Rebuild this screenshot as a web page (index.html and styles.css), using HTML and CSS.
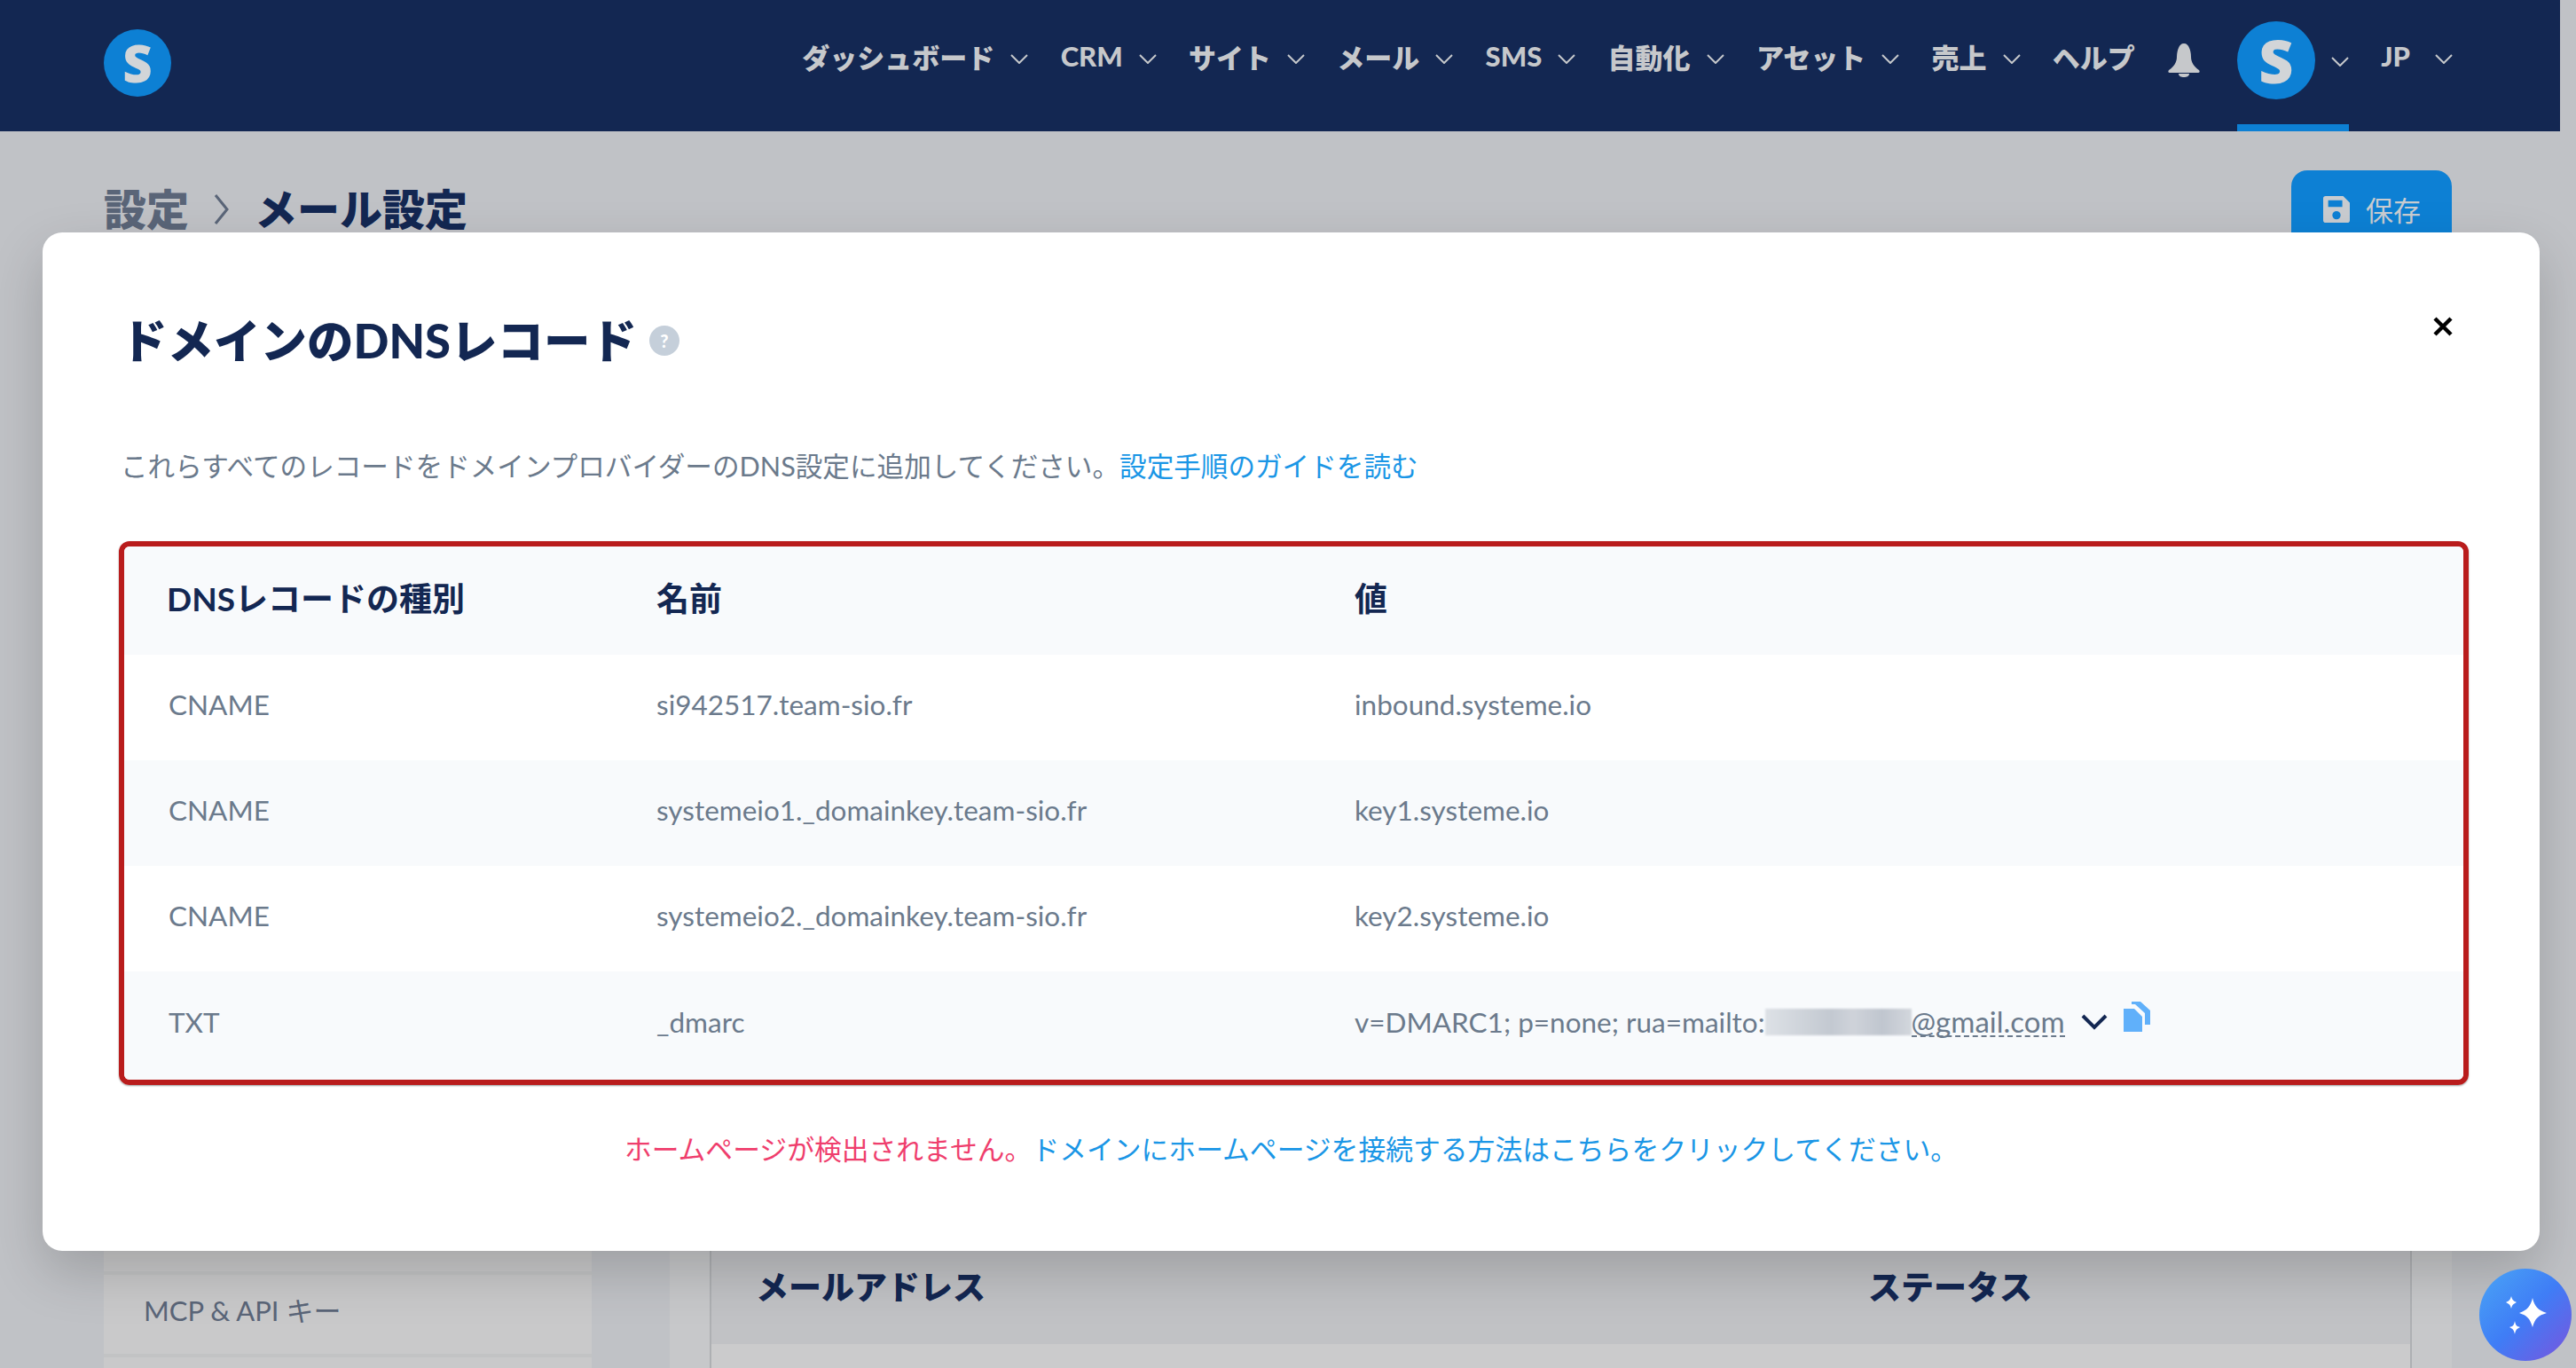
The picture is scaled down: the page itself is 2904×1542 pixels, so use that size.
FILE: index.html
```html
<!DOCTYPE html>
<html lang="ja">
<head>
    <meta charset="UTF-8">
    <title>メール設定</title>
    <link rel="stylesheet" href="styles.css">
</head>
<body>
    <div class="app">
        <div class="header">
            <div class="logo">S</div>
            <div class="nav">
                <div class="nav-item">ダッシュボード <svg class="chev" viewBox="0 0 20 11"><path d="M1 1l9 9 9-9"/></svg></div>
                <div class="nav-item">CRM <svg class="chev" viewBox="0 0 20 11"><path d="M1 1l9 9 9-9"/></svg></div>
                <div class="nav-item">サイト <svg class="chev" viewBox="0 0 20 11"><path d="M1 1l9 9 9-9"/></svg></div>
                <div class="nav-item">メール <svg class="chev" viewBox="0 0 20 11"><path d="M1 1l9 9 9-9"/></svg></div>
                <div class="nav-item">SMS <svg class="chev" viewBox="0 0 20 11"><path d="M1 1l9 9 9-9"/></svg></div>
                <div class="nav-item">自動化 <svg class="chev" viewBox="0 0 20 11"><path d="M1 1l9 9 9-9"/></svg></div>
                <div class="nav-item">アセット <svg class="chev" viewBox="0 0 20 11"><path d="M1 1l9 9 9-9"/></svg></div>
                <div class="nav-item">売上 <svg class="chev" viewBox="0 0 20 11"><path d="M1 1l9 9 9-9"/></svg></div>
                <div class="nav-item">ヘルプ</div>
                <svg class="bell" viewBox="0 0 36 38"><path d="M18 0c3 0 5 2 6 5 1 2 2 6 2 10 0 6 3 11 9 15 1 1 1 3-1 3H2c-2 0-2-2-1-3 6-4 9-9 9-15 0-4 1-8 2-10 1-3 3-5 6-5zM12 34h12c0 3-3 4-6 4s-6-1-6-4z"/></svg>
                <div class="user-item">
                    <div class="avatar">S</div>
                    <svg class="chev" viewBox="0 0 20 11"><path d="M1 1l9 9 9-9"/></svg>
                </div>
                <div class="nav-item lang-item">JP <svg class="chev" viewBox="0 0 20 11"><path d="M1 1l9 9 9-9"/></svg></div>
            </div>
        </div>

        <div class="page">
            <div class="title-row">
                <h1 class="crumb">
                    <span class="crumb-parent">設定</span>
                    <svg class="crumb-sep" viewBox="0 0 18 36"><path d="M2 2l13 16L2 34"/></svg>
                    <span>メール設定</span>
                </h1>
                <button class="save-btn">
                    <svg class="save-icon" viewBox="0 0 32 32"><path d="M3 0h21l8 8v21a3 3 0 0 1-3 3H3a3 3 0 0 1-3-3V3a3 3 0 0 1 3-3zm3 5v8h17V5zm10 13a5 5 0 1 0 0 10 5 5 0 0 0 0-10z" fill-rule="evenodd"/></svg>
                    保存
                </button>
            </div>

            <div class="content">
                <div class="sidebar">
                    <div class="side-item"></div>
                    <div class="side-item">MCP &amp; API キー</div>
                    <div class="side-item"></div>
                </div>
                <div class="panel">
                    <div class="panel-inner">
                        <div class="panel-head">
                            <div class="panel-col-mail">メールアドレス</div>
                            <div>ステータス</div>
                        </div>
                    </div>
                </div>
            </div>
        </div>
    </div>

    <div class="modal">
        <div class="modal-head">
            <h2 class="modal-title">ドメインのDNSレコード</h2>
            <span class="help">?</span>
            <svg class="close" viewBox="0 0 22 22"><path d="M2 2l18 18M20 2L2 20"/></svg>
        </div>
        <p class="modal-desc">これらすべてのレコードをドメインプロバイダーのDNS設定に追加してください。<a href="#">設定手順のガイドを読む</a></p>

        <div class="records">
            <table>
                <thead>
                    <tr>
                        <th class="col-type">DNSレコードの種別</th>
                        <th class="col-name">名前</th>
                        <th>値</th>
                    </tr>
                </thead>
                <tbody>
                    <tr>
                        <td>CNAME</td>
                        <td>si942517.team-sio.fr</td>
                        <td>inbound.systeme.io</td>
                    </tr>
                    <tr class="alt">
                        <td>CNAME</td>
                        <td>systemeio1._domainkey.team-sio.fr</td>
                        <td>key1.systeme.io</td>
                    </tr>
                    <tr>
                        <td>CNAME</td>
                        <td>systemeio2._domainkey.team-sio.fr</td>
                        <td>key2.systeme.io</td>
                    </tr>
                    <tr class="alt last-row">
                        <td>TXT</td>
                        <td>_dmarc</td>
                        <td>
                            <div class="value-cell">
                                <span>v=DMARC1; p=none; rua=mailto:</span><span class="blurred"></span><span class="dashed">@gmail.com</span>
                                <svg class="expand" viewBox="0 0 30 18"><path d="M2 2l13 13L28 2"/></svg>
                                <svg class="copy" viewBox="0 0 30 34"><path d="M0 8h12l9 9v17H0z"/><path d="M9 0h10l11 10v16h-6V13L13 3H9z"/></svg>
                            </div>
                        </td>
                    </tr>
                </tbody>
            </table>
        </div>

        <p class="modal-foot"><span class="error">ホームページが検出されません。</span><a href="#">ドメインにホームページを接続する方法はこちらをクリックしてください。</a></p>
    </div>

    <div class="fab">
        <svg viewBox="0 0 60 60"><path d="M38 11c2 9 6 14 16 17-10 3-13 6-16 16-3-10-6-13-15-16 9-3 13-8 15-17z"/><path d="M14 9c1 4 2 5 6 7-4 2-5 3-6 7-1-4-2-5-6-7 4-2 5-3 6-7z"/><path d="M18 37c1 5 2 6 6 7-4 2-5 3-6 8-1-5-2-6-6-8 4-1 5-2 6-7z"/></svg>
    </div>
</body>
</html>
```

FILE: styles.css
```css
body {
    margin: 0;
    height: 1542px;
    overflow: hidden;
    background-color: #c0c2c6;
    font-family: "Lato", "Noto Sans CJK JP", sans-serif;
    color: #5a6578;
}

.app {
    width: 2886px;
}

.header {
    height: 148px;
    box-sizing: border-box;
    padding: 0 121px 0 117px;
    background-color: #132752;
    display: flex;
    justify-content: space-between;
    color: #c6c8cb;
    font-size: 31px;
    font-weight: 900;
}

.logo {
    width: 76px;
    height: 76px;
    margin-top: 33px;
    border-radius: 50%;
    background-color: #0d80d4;
    color: #d2d5d8;
    font-family: "Open Sans", sans-serif;
    font-size: 58px;
    font-weight: 800;
    line-height: 76px;
    text-align: center;
}

.nav {
    display: flex;
    align-items: flex-start;
}

.nav-item {
    display: flex;
    align-items: center;
    gap: 18px;
    margin-left: 36.3px;
    margin-top: 44px;
    height: 38px;
    white-space: nowrap;
}

.lang-item {
    gap: 28px;
}

.chev {
    width: 20px;
    height: 11px;
    margin-top: 6px;
    fill: none;
    stroke: #c6c8cb;
    stroke-width: 2;
}

.bell {
    width: 36px;
    height: 38px;
    margin: 49px 0 0 37px;
    fill: #c6c8cb;
}

.user-item {
    display: flex;
    gap: 18px;
    height: 148px;
    box-sizing: border-box;
    margin-left: 42px;
    padding-top: 24px;
    border-bottom: 8px solid #0d80d4;
}

.user-item .chev {
    margin-top: 40px;
}

.avatar {
    width: 88px;
    height: 88px;
    border-radius: 50%;
    background-color: #0d80d4;
    color: #d2d5d8;
    font-family: "Open Sans", sans-serif;
    font-size: 68px;
    font-weight: 800;
    line-height: 88px;
    text-align: center;
}

.page {
    padding: 44px 122px 0 117px;
}

.title-row {
    display: flex;
    justify-content: space-between;
    align-items: flex-start;
    height: 1148px;
}

.crumb {
    margin: 9px 0 0;
    display: flex;
    align-items: center;
    gap: 28px;
    font-size: 48px;
    line-height: 70px;
    font-weight: 900;
    color: #132752;
}

.crumb-parent {
    color: #5a6578;
}

.crumb-sep {
    width: 18px;
    height: 36px;
    fill: none;
    stroke: #5a6578;
    stroke-width: 3;
}

.save-btn {
    width: 181px;
    height: 120px;
    padding: 0 0 33px;
    border: none;
    border-radius: 18px;
    background-color: #0d80d4;
    color: #c9ccd0;
    font-family: inherit;
    font-size: 31px;
    display: flex;
    align-items: center;
    justify-content: center;
    gap: 17px;
}

.save-icon {
    width: 32px;
    height: 30px;
    fill: #c9ccd0;
}

.content {
    display: flex;
    justify-content: space-between;
}

.sidebar {
    width: 550px;
    background-color: #c9c9ca;
}

.side-item {
    height: 93px;
    box-sizing: border-box;
    padding-left: 45px;
    font-size: 31px;
    line-height: 80px;
    border-top: 4px solid #c2c3c4;
}

.panel {
    width: 2009px;
    height: 210px;
    box-sizing: border-box;
    padding: 0 45px;
    background-color: #c7c8ca;
}

.panel-inner {
    height: 100%;
    box-sizing: border-box;
    padding-top: 43px;
    border: 2px solid #aeb0b3;
    border-width: 0 2px;
    background-color: #cbcbcc;
}

.panel-head {
    height: 132px;
    display: flex;
    align-items: center;
    padding-left: 50px;
    background-color: #c1c2c5;
    font-size: 37px;
    font-weight: 900;
    color: #132752;
}

.panel-col-mail {
    width: 1254px;
}

/* modal over the page */
.modal {
    position: absolute;
    left: 48px;
    top: 262px;
    width: 2815px;
    height: 1148px;
    box-sizing: border-box;
    padding: 86px 80px 0 86px;
    background-color: white;
    border-radius: 22px;
    box-shadow: 0 24px 60px rgba(0, 0, 0, 0.18);
}

.modal-head {
    display: flex;
    align-items: center;
    gap: 16px;
    height: 66px;
}

.modal-title {
    margin: 0;
    padding-left: 2px;
    font-size: 52.5px;
    font-weight: 900;
    color: #132752;
}

.help {
    width: 34px;
    height: 34px;
    margin-top: 6px;
    margin-left: -2px;
    border-radius: 50%;
    background-color: #c5cfda;
    color: white;
    font-size: 20px;
    font-weight: 900;
    line-height: 34px;
    text-align: center;
}

.close {
    width: 22px;
    height: 22px;
    margin: -26px 18px 0 auto;
    fill: none;
    stroke: black;
    stroke-width: 4.5;
}

.modal-desc {
    margin: 90px 0 0;
    padding-left: 2px;
    font-size: 30.6px;
    line-height: 44px;
    color: #6b7a8c;
}

a {
    color: #1a96e6;
    text-decoration: none;
}

.records {
    margin-top: 62px;
    border: 6px solid #b91c1c;
    border-radius: 12px;
    box-shadow: 0 1px 2px rgba(0, 0, 0, 0.4);
    overflow: hidden;
}

table {
    width: 100%;
    table-layout: fixed;
    border-collapse: collapse;
}

th {
    height: 122px;
    box-sizing: border-box;
    padding: 0 0 8px 48px;
    background-color: #f8fafc;
    font-size: 37px;
    font-weight: 700;
    text-align: left;
    color: #132752;
}

.col-type {
    width: 552px;
}

.col-name {
    width: 787px;
}

td {
    height: 119px;
    box-sizing: border-box;
    padding: 0 0 8px 48px;
    font-size: 31.5px;
    color: #6b7a8c;
}

td:first-child {
    padding-left: 50px;
}

.alt {
    background-color: #f8fafc;
}

.last-row td {
    height: 122px;
}

.value-cell {
    display: flex;
    align-items: center;
}

.blurred {
    width: 165px;
    height: 30px;
    background: linear-gradient(90deg, #dde1e6, #c3c9d1 45%, #cfd3da 60%, #c0c6cf 80%, #d3d7dd);
    filter: blur(1px);
}

.dashed {
    border-bottom: 2px dashed #6b7a8c;
    font-size: 33px;
    line-height: 32px;
}

.expand {
    width: 30px;
    height: 18px;
    margin-left: 18px;
    fill: none;
    stroke: #132752;
    stroke-width: 4;
}

.copy {
    width: 30px;
    height: 34px;
    margin: -12px 0 0 18px;
    fill: #60b0fa;
}

.modal-foot {
    margin: 51px 0 0;
    padding-right: 6px;
    font-size: 30.8px;
    line-height: 44px;
    text-align: center;
}

.error {
    color: #ef3e6d;
}

.fab {
    position: absolute;
    left: 2795px;
    top: 1430px;
    width: 104px;
    height: 104px;
    border-radius: 50%;
    background: linear-gradient(135deg, #4aa5f5, #3f7df6 50%, #7a54dd);
    display: flex;
    align-items: center;
    justify-content: center;
}

.fab svg {
    width: 60px;
    height: 60px;
    fill: white;
}
```
